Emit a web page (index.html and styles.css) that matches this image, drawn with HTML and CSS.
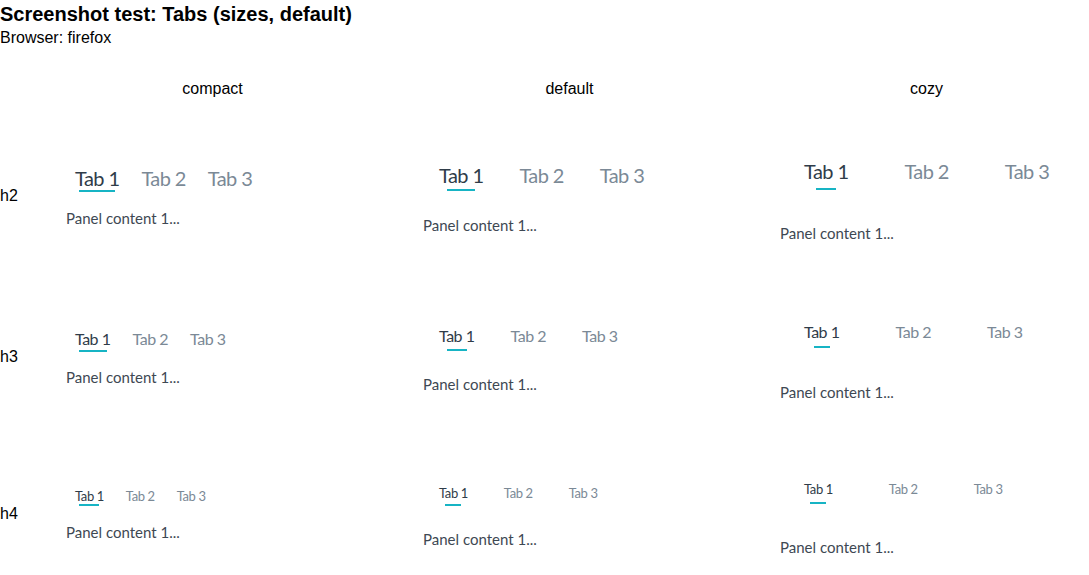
FILE: index.html
```html
<!DOCTYPE html>
<html>
<head>
<meta charset="utf-8">
<title>Tabs sizes</title>
<link rel="stylesheet" href="styles.css">
</head>
<body>
<h1 class="title">Screenshot test: Tabs (sizes, default)</h1>
<div class="browser">Browser: firefox</div>
<div class="grid">
  <div class="head"></div>
  <div class="head">compact</div>
  <div class="head">default</div>
  <div class="head">cozy</div>

  <div class="label">h2</div>
  <div class="cell compact h2"><div class="tabs"><div class="tab active">Tab 1</div><div class="tab">Tab 2</div><div class="tab">Tab 3</div></div><div class="panel">Panel content 1...</div></div>
  <div class="cell default h2"><div class="tabs"><div class="tab active">Tab 1</div><div class="tab">Tab 2</div><div class="tab">Tab 3</div></div><div class="panel">Panel content 1...</div></div>
  <div class="cell cozy h2"><div class="tabs"><div class="tab active">Tab 1</div><div class="tab">Tab 2</div><div class="tab">Tab 3</div></div><div class="panel">Panel content 1...</div></div>

  <div class="label">h3</div>
  <div class="cell compact h3"><div class="tabs"><div class="tab active">Tab 1</div><div class="tab">Tab 2</div><div class="tab">Tab 3</div></div><div class="panel">Panel content 1...</div></div>
  <div class="cell default h3"><div class="tabs"><div class="tab active">Tab 1</div><div class="tab">Tab 2</div><div class="tab">Tab 3</div></div><div class="panel">Panel content 1...</div></div>
  <div class="cell cozy h3"><div class="tabs"><div class="tab active">Tab 1</div><div class="tab">Tab 2</div><div class="tab">Tab 3</div></div><div class="panel">Panel content 1...</div></div>

  <div class="label">h4</div>
  <div class="cell compact h4"><div class="tabs"><div class="tab active">Tab 1</div><div class="tab">Tab 2</div><div class="tab">Tab 3</div></div><div class="panel">Panel content 1...</div></div>
  <div class="cell default h4"><div class="tabs"><div class="tab active">Tab 1</div><div class="tab">Tab 2</div><div class="tab">Tab 3</div></div><div class="panel">Panel content 1...</div></div>
  <div class="cell cozy h4"><div class="tabs"><div class="tab active">Tab 1</div><div class="tab">Tab 2</div><div class="tab">Tab 3</div></div><div class="panel">Panel content 1...</div></div>
</div>
</body>
</html>
```

FILE: styles.css
```css
html, body {
  margin: 0;
  padding: 0;
  overflow: hidden;
  background: #ffffff;
}

body {
  font-family: "Liberation Sans", Arial, sans-serif;
  color: #000000;
}

.title {
  margin: 0;
  font-size: 20px;
  line-height: 28px;
  font-weight: 700;
}

.browser {
  padding-top: 1px;
  font-size: 16px;
  line-height: 18px;
}

.grid {
  display: grid;
  grid-template-columns: 34px repeat(3, 357px);
  width: 1105px;
}

.head {
  padding: 33px 0 16px;
  font-size: 16px;
  line-height: 18px;
  text-align: center;
}

.label {
  align-self: center;
  font-size: 16px;
  line-height: 18px;
}

.cell {
  align-self: center;
  padding: 33px 0 34px 32px;
  font-family: Lato, "Noto Sans", sans-serif;
}

/* sizes */
.h2 { --fs: 20px; --lh: 24px; }
.h3 { --fs: 16px; --lh: 20px; }
.h4 { --fs: 13px; --lh: 16px; }

/* densities */
.compact { --pt: 4px; --ph: 11px; --shift: -2px; }
.default { --pt: 8px; --ph: 18px; --shift: -2px; }
.cozy { --pt: 12px; --ph: 28px; --shift: -4px; }

.compact.h2 { --uw: 36px; --ug: 0px; --pg: 16px; }
.compact.h3 { --uw: 28px; --ug: 1px; --pg: 15px; }
.compact.h4 { --uw: 20px; --ug: 0px; --pg: 16px; }
.default.h2 { --uw: 28px; --ug: 2px; --pg: 24px; }
.default.h3 { --uw: 20px; --ug: 3px; --pg: 23px; }
.default.h4 { --uw: 16px; --ug: 3px; --pg: 23px; }
.cozy.h2 { --uw: 20px; --ug: 5px; --pg: 33px; }
.cozy.h3 { --uw: 16px; --ug: 4px; --pg: 34px; }
.cozy.h4 { --uw: 16px; --ug: 5px; --pg: 33px; }

.tabs {
  display: flex;
  margin-left: var(--shift);
}

.tab {
  display: flex;
  flex-direction: column;
  align-items: center;
  padding: var(--pt) var(--ph) 0;
  font-size: var(--fs);
  line-height: var(--lh);
  letter-spacing: -0.03em;
  color: #7b8996;
  white-space: nowrap;
}

.tab::after {
  content: "";
  display: block;
  width: var(--uw);
  height: 2px;
  margin-top: var(--ug);
  background: transparent;
}

.tab.active {
  color: #2f3c49;
}

.tab.active::after {
  background: #17b4c4;
}

.panel {
  margin-top: var(--pg);
  font-size: 15px;
  line-height: 20px;
  color: #3e4853;
  white-space: nowrap;
}
```
